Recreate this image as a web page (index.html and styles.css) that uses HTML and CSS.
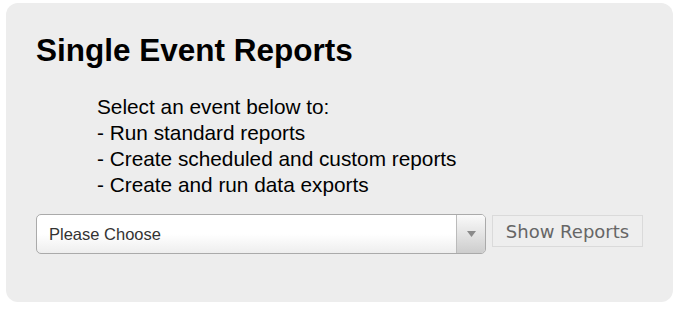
FILE: index.html
```html
<!DOCTYPE html>
<html lang="en">
<head>
    <meta charset="UTF-8">
    <title>Single Event Reports</title>
    <link rel="stylesheet" href="styles.css">
</head>
<body>
    <div class="panel">
        <h2 class="panel__title">Single Event Reports</h2>
        <div class="intro">
            Select an event below to:<br>
            - Run standard reports<br>
            - Create scheduled and custom reports<br>
            - Create and run data exports
        </div>
        <div class="picker">
            <div class="select">
                <span class="select__text">Please Choose</span>
                <span class="select__arrow">
                    <svg width="9" height="6" viewBox="0 0 9 6"><path d="M0 0h9L4.5 6z" fill="#8a8a8a"/></svg>
                </span>
            </div>
            <button class="showbtn" type="button">Show Reports</button>
        </div>
    </div>
</body>
</html>
```

FILE: styles.css
```css
body {
    margin: 0;
    padding: 3px 6px 7px 6px;
    background: #fff;
    font-family: "Liberation Sans", Arial, sans-serif;
    color: #000;
}
.panel {
    background: #ededed;
    border-radius: 12px;
    height: 299px;
    box-sizing: border-box;
    padding: 28px 30px 0 30px;
}
.panel__title {
    margin: 0;
    font-size: 31.5px;
    font-weight: bold;
    line-height: 38px;
}
.intro {
    margin: 25px 0 0 61px;
    font-size: 20.8px;
    line-height: 26px;
}
.picker {
    display: flex;
    align-items: flex-start;
    margin-top: 16px;
}
.select {
    width: 450px;
    height: 40px;
    box-sizing: border-box;
    border: 1px solid #aaa;
    border-radius: 5px;
    background: linear-gradient(to bottom, #fff 0%, #fff 50%, #eee 100%);
    display: flex;
    align-items: center;
}
.select__text {
    flex: 1;
    padding-left: 12px;
    font-size: 16.5px;
    color: #333;
}
.select__arrow {
    width: 29px;
    height: 100%;
    box-sizing: border-box;
    border-left: 1px solid #bbb;
    border-radius: 0 4px 4px 0;
    background: linear-gradient(to bottom, #fafafa 0%, #cdcdcd 100%);
    display: flex;
    align-items: center;
    justify-content: center;
}
.showbtn {
    margin: 1px 0 0 6px;
    width: 151px;
    height: 32px;
    border: 1px solid #dadada;
    background: #eee;
    color: #666;
    font-family: "DejaVu Sans", Verdana, sans-serif;
    font-size: 18px;
    padding: 0;
}
```
